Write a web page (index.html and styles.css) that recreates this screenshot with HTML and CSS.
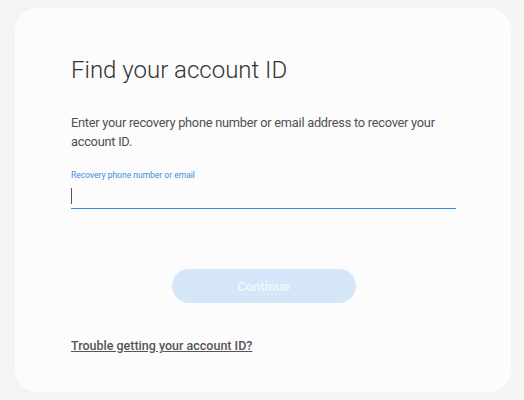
FILE: index.html
```html
<!DOCTYPE html>
<html lang="en">

<head>
    <meta charset="UTF-8">
    <meta name="viewport" content="width=device-width, initial-scale=1.0">
    <title>Find your account ID</title>
    <link rel="stylesheet" href="styles.css">
</head>

<body>
    <div class="card">
        <h1 class="title">Find your account ID</h1>
        <p class="desc">Enter your recovery phone number or email address to recover your account ID.</p>

        <div class="field">
            <label class="field-label" for="recovery">Recovery phone number or email</label>
            <div class="field-input">
                <span class="caret"></span>
                <input type="text" id="recovery">
            </div>
        </div>

        <div class="actions">
            <button class="btn-continue" disabled>Continue</button>
        </div>

        <a class="help-link" href="#">Trouble getting your account ID?</a>
    </div>
</body>

</html>
```

FILE: styles.css
```css
body {
    margin: 0;
    background-color: #f4f4f4;
    font-family: Roboto, "Noto Sans", sans-serif;
    color: #555;
}

.card {
    margin: 8px 13px 8px 15px;
    height: 384px;
    box-sizing: border-box;
    background-color: #fcfcfc;
    border-radius: 22px;
    padding: 45px 55px 0 56px;
}

.title {
    margin: 0;
    font-size: 24px;
    line-height: 34px;
    font-weight: 300;
    color: #333;
}

.desc {
    margin: 26px 0 0;
    font-size: 12.8px;
    line-height: 19px;
    letter-spacing: -0.25px;
    color: #505050;
}

.field {
    margin-top: 18px;
}

.field-label {
    display: block;
    font-size: 8.5px;
    line-height: 12px;
    color: #3d8be0;
}

.field-input {
    position: relative;
    margin-top: 3px;
    border-bottom: 1.5px solid #3b88dd;
    height: 24px;
}

.field-input input {
    display: block;
    width: 100%;
    height: 100%;
    padding: 0;
    border: none;
    background: transparent;
    outline: none;
}

.caret {
    position: absolute;
    left: 0;
    top: 4px;
    width: 1px;
    height: 16px;
    background-color: #555;
}

.actions {
    display: flex;
    justify-content: center;
    margin-top: 60px;
}

.btn-continue {
    width: 184px;
    height: 34px;
    border: none;
    border-radius: 17px;
    background-color: #d5e6f9;
    color: #eef5fd;
    font-family: inherit;
    font-size: 13px;
    font-weight: 700;
}

.help-link {
    display: inline-block;
    margin-top: 35px;
    font-size: 12.5px;
    font-weight: 500;
    color: #555;
}
```
